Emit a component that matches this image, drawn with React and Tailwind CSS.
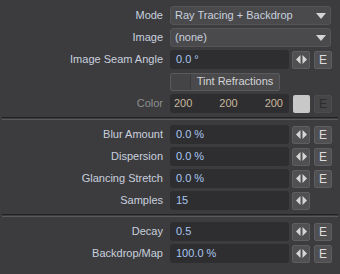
import React from 'react';

const Spin = () => (
  <svg width="11" height="9" viewBox="0 0 11 9" className="block">
    <polygon points="0,4.5 4.5,0 4.5,9" fill="#d6d6d6" />
    <polygon points="6.5,0 11,4.5 6.5,9" fill="#d6d6d6" />
  </svg>
);

const Arrow = () => (
  <svg width="10" height="6" viewBox="0 0 10 6" className="block">
    <polygon points="0,0 10,0 5,6" fill="#d4d4d4" />
  </svg>
);

function Row({ label, dim, children }) {
  return (
    <div className="flex h-[19px] items-center">
      <div className={`w-[163px] text-right leading-none ${dim ? 'text-[#8e8e90]' : 'text-[#c9d0de]'}`}>{label}</div>
      <div className="ml-[7px] flex h-full items-center">{children}</div>
    </div>
  );
}

function Field({ value }) {
  return (
    <div className="flex h-[19px] w-[119px] items-center rounded-[3px] bg-[#2e2e30] px-[6px] text-[#a9c6f0]">
      {value}
    </div>
  );
}

function SpinBtn() {
  return (
    <div className="ml-[3px] flex h-[18px] w-[18px] items-center justify-center rounded-[2px] border border-[#5e5e60] bg-[#505052]">
      <Spin />
    </div>
  );
}

function EBtn({ disabled }) {
  return (
    <div
      className={`ml-[4px] flex h-[18px] w-[18px] items-center justify-center rounded-[2px] border text-[12px] ${
        disabled ? 'border-[#4c4c4e] bg-[#464648] text-[#2c2c2e]' : 'border-[#5e5e60] bg-[#505052] text-[#dcdcdc]'
      }`}
    >
      E
    </div>
  );
}

function Dropdown({ value }) {
  return (
    <div className="flex h-[19px] w-[161px] items-center justify-between rounded-[3px] border border-[#555557] bg-[#4a4a4c] pl-[4px] pr-[4px] text-[#c9d0de]">
      <span>{value}</span>
      <Arrow />
    </div>
  );
}

function Separator() {
  return (
    <div className="mx-[2px] my-[4px] h-[3px] border-t border-b border-t-[#222224] border-b-[#5a5a5c]" />
  );
}

export default function App() {
  return (
    <div
      className="h-[274px] w-[340px] bg-[#3c3c3e] pt-[6px] text-[11px]"
      style={{ fontFamily: '"Liberation Sans", Arial, sans-serif' }}
    >
      <div className="flex flex-col gap-[3px]">
        <Row label="Mode">
          <Dropdown value="Ray Tracing + Backdrop" />
        </Row>
        <Row label="Image">
          <Dropdown value="(none)" />
        </Row>
        <Row label="Image Seam Angle">
          <Field value="0.0 °" />
          <SpinBtn />
          <EBtn />
        </Row>
        <Row label="">
          <div className="flex h-[18px] w-[110px] overflow-hidden rounded-[2px] border border-[#5a5a5c] bg-[#4a4a4c] text-[#d4d4d6]">
            <div className="w-[20px] border-r border-[#3a3a3c] bg-[#444446]" />
            <div className="flex flex-1 items-center justify-center">Tint Refractions</div>
          </div>
        </Row>
        <Row label="Color" dim>
          <div className="flex h-[19px] w-[119px] items-center justify-between rounded-[3px] bg-[#2e2e30] pl-[4px] pr-[6px] text-[#c8b89e]">
            <span>200</span>
            <span>200</span>
            <span>200</span>
          </div>
          <div className="ml-[4px] h-[18px] w-[17px] rounded-[2px] bg-[#c8c8c8]" />
          <EBtn disabled />
        </Row>
      </div>
      <Separator />
      <div className="flex flex-col gap-[3px] pt-[1px]">
        <Row label="Blur Amount">
          <Field value="0.0 %" />
          <SpinBtn />
          <EBtn />
        </Row>
        <Row label="Dispersion">
          <Field value="0.0 %" />
          <SpinBtn />
          <EBtn />
        </Row>
        <Row label="Glancing Stretch">
          <Field value="0.0 %" />
          <SpinBtn />
          <EBtn />
        </Row>
        <Row label="Samples">
          <Field value="15" />
          <SpinBtn />
        </Row>
      </div>
      <Separator />
      <div className="flex flex-col gap-[3px] pt-[1px]">
        <Row label="Decay">
          <Field value="0.5" />
          <SpinBtn />
          <EBtn />
        </Row>
        <Row label="Backdrop/Map">
          <Field value="100.0 %" />
          <SpinBtn />
          <EBtn />
        </Row>
      </div>
    </div>
  );
}
